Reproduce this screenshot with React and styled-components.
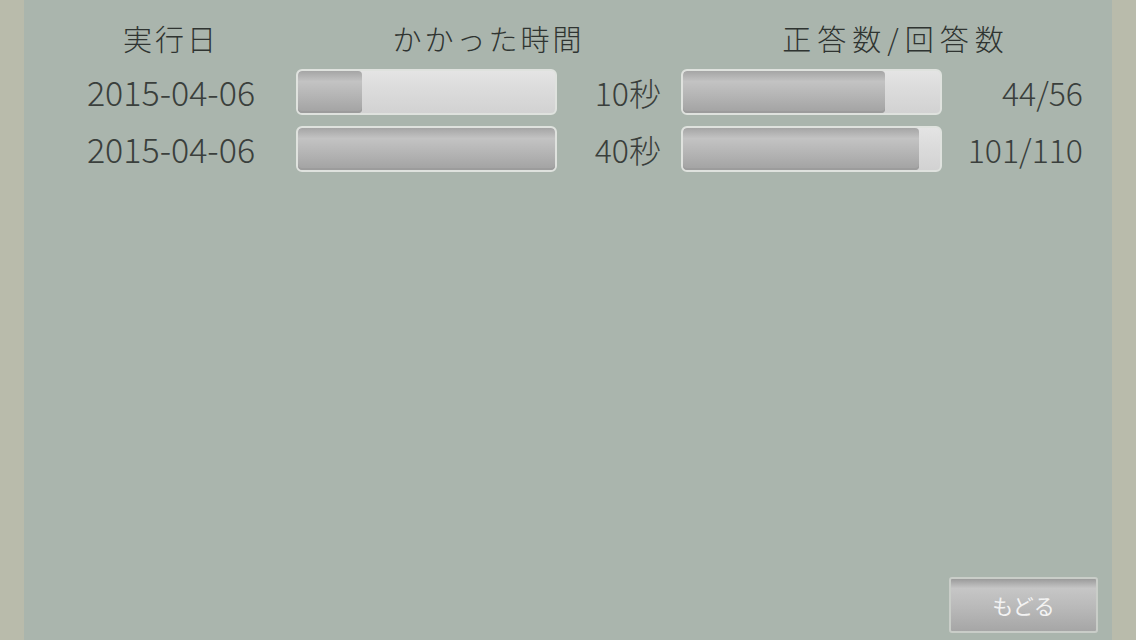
import React from 'react'
import styled, { createGlobalStyle } from 'styled-components'

const records = [
  { date: '2015-04-06', seconds: 10, correct: 44, answered: 56 },
  { date: '2015-04-06', seconds: 40, correct: 101, answered: 110 }
]

const maxSeconds = Math.max(...records.map((r) => r.seconds))

function Bar({ ratio }) {
  return (
    <Track>
      <Fill style={{ width: `${Math.min(ratio, 1) * 100}%` }} />
    </Track>
  )
}

export default function App() {
  return (
    <>
      <GlobalStyle />
      <Screen>
        <Panel>
          <Table>
            <Header>実行日</Header>
            <Header $span={2}>かかった時間</Header>
            <Header $span={2} $shift={28} $spacing={6}>
              正答数/回答数
            </Header>

            {records.map((r, i) => (
              <React.Fragment key={i}>
                <DateCell>{r.date}</DateCell>
                <BarCell>
                  <Bar ratio={r.seconds / maxSeconds} />
                </BarCell>
                <Value $pad={20}>{r.seconds}秒</Value>
                <BarCell>
                  <Bar ratio={r.correct / r.answered} />
                </BarCell>
                <Value>
                  {r.correct}/{r.answered}
                </Value>
              </React.Fragment>
            ))}
          </Table>

          <Footer>
            <BackButton>もどる</BackButton>
          </Footer>
        </Panel>
      </Screen>
    </>
  )
}

const GlobalStyle = createGlobalStyle`
  html, body {
    margin: 0;
    padding: 0;
    background: #b9bbab;
  }
  body {
    font-family: 'Noto Sans CJK JP', 'Liberation Sans', sans-serif;
  }
`

const Screen = styled.div`
  width: 1136px;
  height: 640px;
  background: #b9bbab;
  display: flex;
  justify-content: center;
`

const Panel = styled.div`
  width: 1088px;
  height: 640px;
  background: #aab5ad;
  display: flex;
  flex-direction: column;
  box-sizing: border-box;
  padding: 0 0 7px 36px;
`

const Table = styled.div`
  display: grid;
  grid-template-columns: 236px 261px 124px 261px 141px;
  grid-auto-rows: 57px;
  grid-template-rows: 60px;
  align-items: center;
  margin-top: 3px;
`

const Header = styled.div`
  grid-column: span ${(p) => p.$span || 1};
  padding-left: ${(p) => p.$shift || 0}px;
  padding-right: ${(p) => (p.$span ? 0 : 14)}px;
  text-align: center;
  font-family: 'Noto Sans CJK JP', sans-serif;
  font-weight: 300;
  font-size: 29px;
  letter-spacing: ${(p) => p.$spacing || 3}px;
  color: #2f3431;
  margin-top: 10px;
`

const DateCell = styled.div`
  padding-right: 14px;
  text-align: center;
  font-family: 'Noto Sans CJK JP', 'Liberation Sans', sans-serif;
  font-weight: 300;
  font-size: 34px;
  color: #3a3f3c;
`

const Value = styled.div`
  padding-right: ${(p) => p.$pad || 0}px;
  text-align: right;
  font-family: 'Noto Sans CJK JP', 'Liberation Sans', sans-serif;
  font-weight: 300;
  font-size: 32px;
  color: #3a3f3c;
`

const BarCell = styled.div`
  display: flex;
  align-items: center;
`

const Track = styled.div`
  box-sizing: border-box;
  width: 261px;
  height: 46px;
  border: 2px solid #dfe2de;
  border-radius: 6px;
  background: linear-gradient(#e4e4e4, #dcdcdc 40%, #d2d2d2);
  overflow: hidden;
  display: flex;
`

const Fill = styled.div`
  height: 100%;
  border-radius: 4px;
  background: linear-gradient(#a5a5a5, #c3c3c3 25%, #b4b4b4 60%, #a2a2a2);
  box-shadow: inset 0 -2px 0 #9c9c9c;
`

const Footer = styled.div`
  margin-top: auto;
  display: flex;
  justify-content: flex-end;
  padding-right: 14px;
`

const BackButton = styled.button`
  width: 149px;
  height: 56px;
  box-sizing: border-box;
  border: 2px solid #c9cdc8;
  border-radius: 3px;
  background: linear-gradient(#9b9b9b, #c6c6c6 18%, #b9b9b9 55%, #a6a6a6);
  color: #f3f3f3;
  font-family: 'Noto Sans CJK JP', sans-serif;
  font-size: 21px;
  cursor: pointer;
  padding: 0;
`
